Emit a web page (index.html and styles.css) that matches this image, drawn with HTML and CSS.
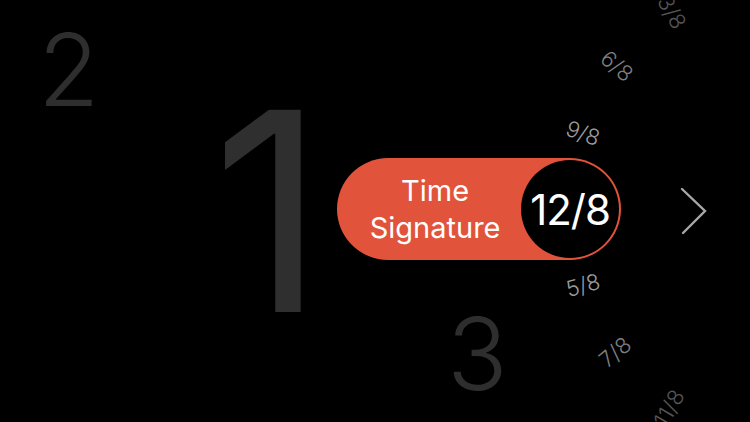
FILE: index.html
```html
<!DOCTYPE html>
<html>
<head>
<meta charset="utf-8">
<link rel="stylesheet" href="styles.css">
</head>
<body>
<div class="stage">
  <div class="row">
    <span class="big-digit">1</span>
    <div class="pill">
      <div class="pill-label">Time<br>Signature</div>
      <div class="pill-value">12/8</div>
    </div>
    <svg class="chevron" width="30" height="50" viewBox="0 0 30 50">
      <polyline points="2,3 25,25 3,47" fill="none" stroke="#a8a8a8" stroke-width="2.4" stroke-linecap="round" stroke-linejoin="miter"/>
    </svg>
  </div>
  <span class="side-digit d2">2</span>
  <span class="side-digit d3">3</span>
  <span class="frac f3">3/8</span>
  <span class="frac f6">6/8</span>
  <span class="frac f9">9/8</span>
  <span class="frac f5">5/8</span>
  <span class="frac f7">7/8</span>
  <span class="frac f11">11/8</span>
</div>
</body>
</html>
```
FILE: styles.css
```css
html, body {
  margin: 0;
  padding: 0;
  background: #000;
}
body {
  font-family: Inter, "Noto Sans", sans-serif;
  color: #fff;
}
.stage {
  position: relative;
  width: 750px;
  height: 422px;
  overflow: hidden;
  background: #000;
  display: flex;
  align-items: center;
}
.row {
  display: flex;
  align-items: center;
  padding-left: 212px;
}
.big-digit {
  font-size: 278px;
  line-height: 1;
  font-weight: 400;
  color: #2f2f2f;
}
.pill {
  margin-left: 12px;
  width: 284px;
  height: 102px;
  box-sizing: border-box;
  border-radius: 51px;
  background: #e1533a;
  display: flex;
  align-items: center;
  padding-right: 2px;
  margin-top: -4px;
}
.pill-label {
  flex: 1;
  text-align: center;
  padding-left: 12px;
  font-size: 29px;
  line-height: 37px;
  font-weight: 400;
  color: #fff;
}
.pill-value {
  width: 98px;
  height: 98px;
  border-radius: 50%;
  background: #000;
  display: flex;
  align-items: center;
  justify-content: center;
  font-size: 42px;
  font-weight: 400;
  letter-spacing: -1px;
  color: #fff;
}
.chevron {
  margin-left: 59px;
  display: block;
}
.side-digit {
  position: absolute;
  font-size: 100px;
  line-height: 1;
  font-weight: 300;
  color: #2e2e2e;
}
.d2 { left: 38px; top: 20px; }
.d3 { left: 447px; top: 304px; }
.frac {
  position: absolute;
  font-size: 22px;
  line-height: 1;
  font-weight: 300;
  white-space: nowrap;
}
.f3 { left: 672px; top: 12px; color: #555; transform: translate(-50%, -50%) rotate(60deg); }
.f6 { left: 617px; top: 66px; color: #7e7e7e; transform: translate(-50%, -50%) rotate(40deg); }
.f9 { left: 583px; top: 133px; color: #9c9c9c; transform: translate(-50%, -50%) rotate(20deg); }
.f5 { left: 583px; top: 285px; color: #9c9c9c; transform: translate(-50%, -50%) rotate(-15deg); }
.f7 { left: 615px; top: 352px; color: #7e7e7e; transform: translate(-50%, -50%) rotate(-40deg); }
.f11 { left: 669px; top: 408px; color: #555; transform: translate(-50%, -50%) rotate(-60deg); }
```
